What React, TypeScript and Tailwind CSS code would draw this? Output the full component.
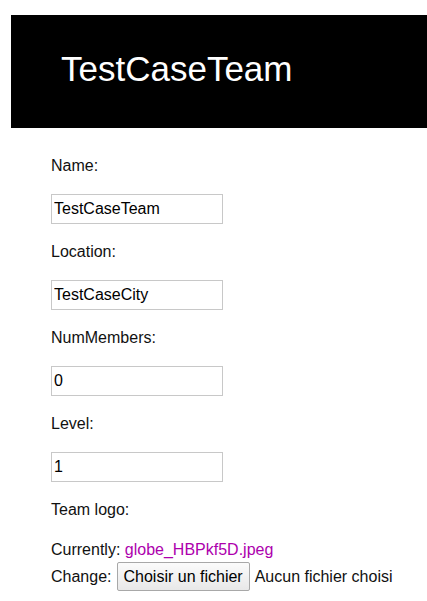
import React from 'react';

const fields = [
  { label: 'Name:', value: 'TestCaseTeam' },
  { label: 'Location:', value: 'TestCaseCity' },
  { label: 'NumMembers:', value: '0' },
  { label: 'Level:', value: '1' },
];

export default function App() {
  return (
    <div className="min-h-screen bg-white pt-[15px] pl-[11px] text-[#111] font-['Liberation_Sans',Arial,sans-serif]">
      <header className="bg-black h-[113px] flex items-center pl-[50px]">
        <h1 className="text-white text-[35px] leading-none pb-[6px]">TestCaseTeam</h1>
      </header>

      <form className="pl-[40px] pt-[29px]">
        {fields.map((f) => (
          <div key={f.label} className="mb-[19px]">
            <label className="block text-[16px] leading-[18px] mb-[19px]">{f.label}</label>
            <input
              type="text"
              defaultValue={f.value}
              className="block w-[172px] h-[30px] border border-[#c8c8c8] px-[2px] text-[16px] text-black outline-none font-['Liberation_Sans',Arial,sans-serif]"
            />
          </div>
        ))}

        <div className="text-[16px] leading-[18px]">
          <label className="block">Team logo:</label>
          <div className="mt-[22px]">
            Currently: <a href="#" className="text-[#ad00ad]">globe_HBPkf5D.jpeg</a>
          </div>
          <div className="mt-[3px] flex items-center">
            <span>Change:</span>
            <button
              type="button"
              className="ml-[5px] h-[29px] px-[6px] border border-[#a8a8a8] rounded-[2px] bg-gradient-to-b from-[#fbfbfb] to-[#e8e8e8] text-[16px] text-black"
            >
              Choisir un fichier
            </button>
            <span className="ml-[5px] text-[16px]">Aucun fichier choisi</span>
          </div>
        </div>
      </form>
    </div>
  );
}
